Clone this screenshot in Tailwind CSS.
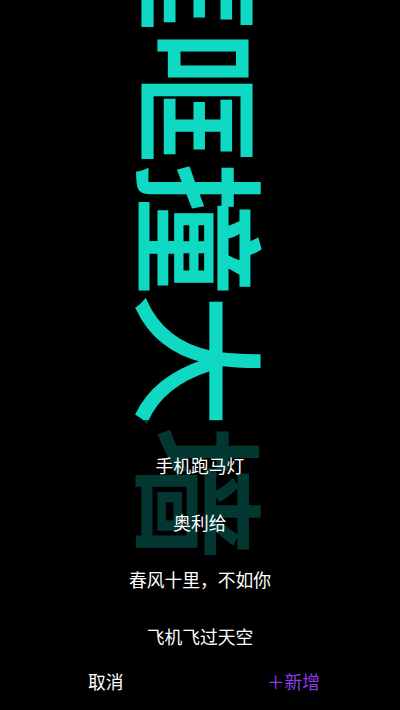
<!DOCTYPE html>
<html lang="zh">
<head>
    <meta charset="UTF-8">
    <meta name="viewport" content="width=device-width, initial-scale=1.0">
    <title>手机跑马灯</title>
    <script src="https://cdn.jsdelivr.net/npm/@tailwindcss/browser@4"></script>
</head>
<body class="bg-black font-['Noto_Sans_CJK_SC',sans-serif]">
    <div class="relative w-[400px] h-[710px] overflow-hidden bg-black">
        <!-- rotated marquee text -->
        <div class="absolute left-[205px] top-[229px] w-0 h-0 flex items-center justify-center">
            <div class="rotate-90 whitespace-nowrap text-[132px] leading-none font-normal text-[#0fd9c3] [-webkit-text-stroke:3px_#0fd9c3]">哐哐撞大墙</div>
        </div>

        <!-- bottom sheet over the marquee -->
        <div class="absolute left-0 right-0 bottom-0 h-[290px] bg-black/75 flex flex-col text-white text-[17.75px]">
            <ul class="flex-1 flex flex-col items-center pt-[32px] gap-[30px] leading-[27px]">
                <li>手机跑马灯</li>
                <li>奥利给</li>
                <li>春风十里，不如你</li>
                <li>飞机飞过天空</li>
            </ul>
            <div class="flex justify-between pl-[88px] pr-[80px] pb-[15px] leading-[27px]">
                <span>取消</span>
                <span class="text-[#8b3dea]">＋新增</span>
            </div>
        </div>
    </div>
</body>
</html>
